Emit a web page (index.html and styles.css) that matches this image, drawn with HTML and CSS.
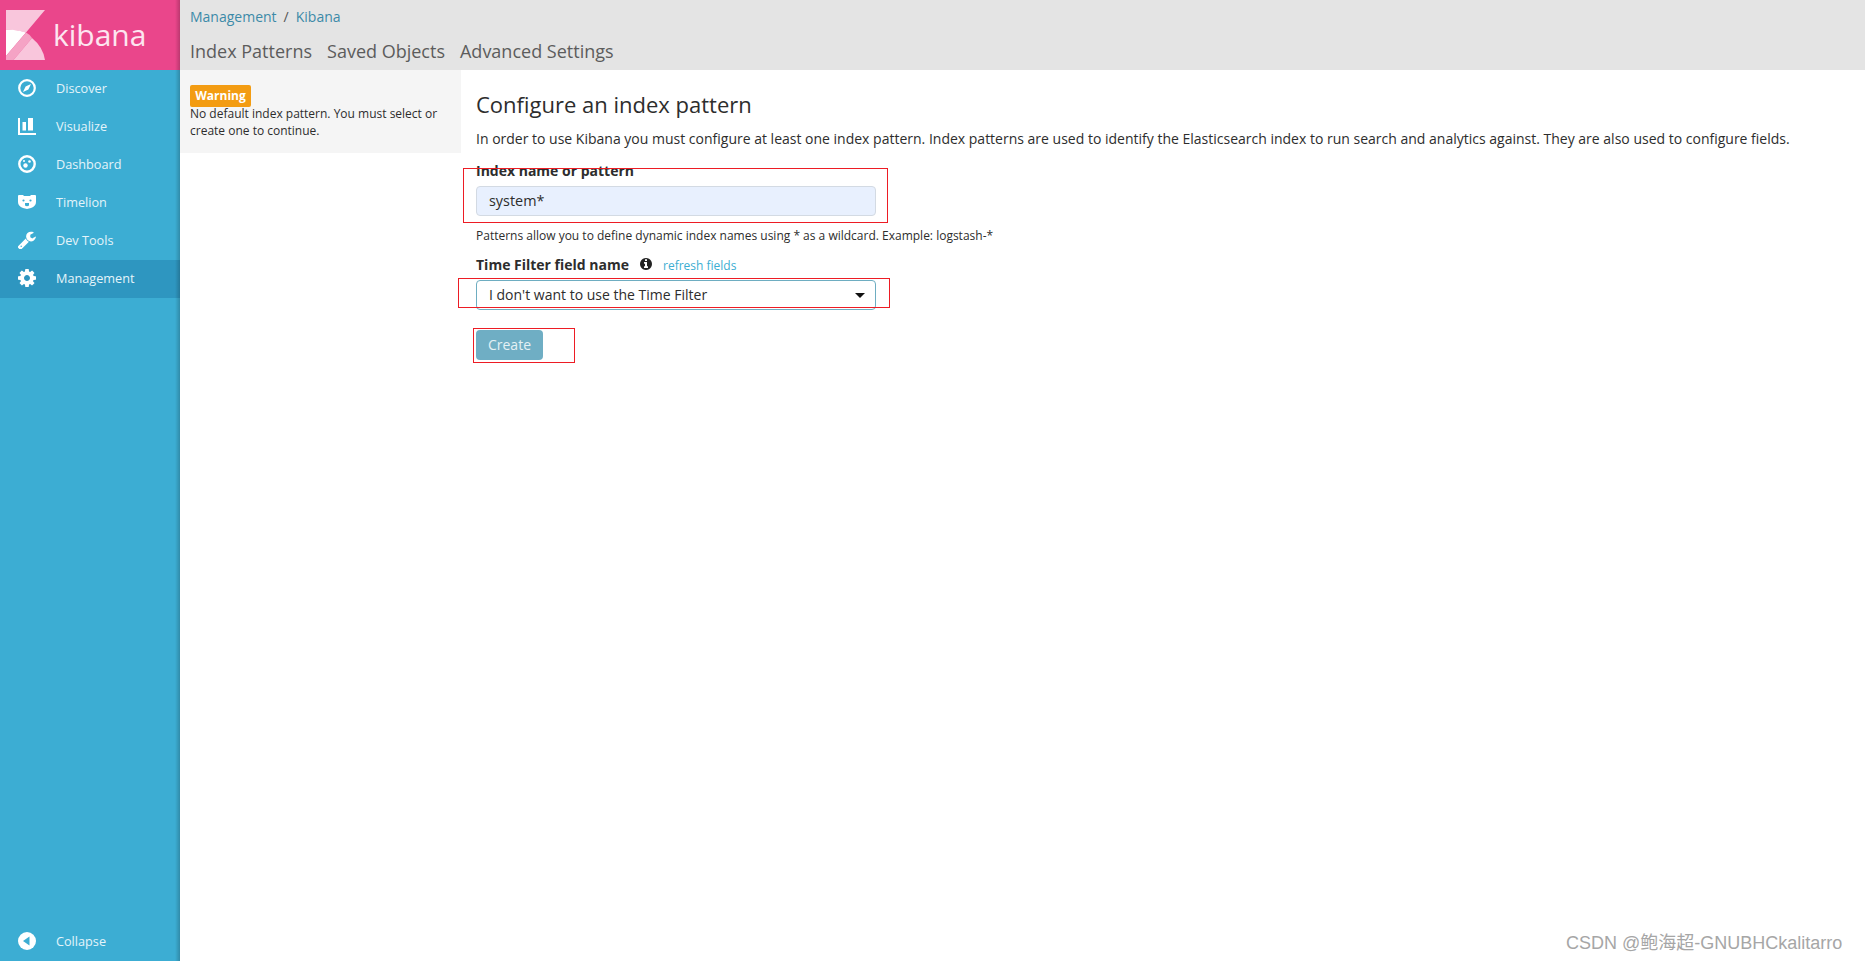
FILE: index.html
```html
<!DOCTYPE html>
<html lang="en">
<head>
<meta charset="utf-8">
<title>Kibana</title>
<link rel="stylesheet" href="styles.css">
</head>
<body>
<div class="app">
  <aside class="sidebar">
    <div class="brand">
      <svg class="logo" viewBox="0 0 39 50" width="39" height="50">
        <path fill="#f9c6dc" d="M0 0H39L20 22.500Q10 19.500 0 19.500Z"/>
        <path fill="#fff" d="M0 19.500Q11 19.500 20 22.500L0 46Z"/>
        <path fill="#f5a3c5" d="M20 22.500Q24 24.500 26 28L7.500 50H0V46Z"/>
        <path fill="#f9c6dc" d="M26 28Q37 37 39 50H7.500Z"/>
      </svg>
      <span class="wordmark">kibana</span>
    </div>
    <nav class="nav">
      <a class="nav-item"><svg class="nav-icon" viewBox="0 0 18 18"><circle cx="9" cy="9" r="7.800" fill="none" stroke="#fff" stroke-width="2.200"/><path fill="#fff" d="M13 5 10.400 10.400 5 13 7.600 7.600Z"/></svg><span>Discover</span></a>
      <a class="nav-item"><svg class="nav-icon" viewBox="0 0 18 18"><path fill="#fff" d="M0 1H2V16H18V18H0ZM4.500 5H8V13.500H4.500ZM10 1H15V13.500H10Z"/></svg><span>Visualize</span></a>
      <a class="nav-item"><svg class="nav-icon" viewBox="0 0 18 18"><circle cx="9" cy="9" r="7.700" fill="none" stroke="#fff" stroke-width="2.400"/><circle cx="7.500" cy="10.500" r="2.200" fill="#fff"/><circle cx="11.500" cy="6.500" r="1.300" fill="#fff"/><circle cx="6" cy="6" r="1" fill="#fff"/></svg><span>Dashboard</span></a>
      <a class="nav-item"><svg class="nav-icon" viewBox="0 0 18 18"><path fill="#fff" fill-rule="evenodd" d="M0 3Q0 2 1 2H5L6 3H12L13 2H17Q18 2 18 3V9Q18 13 13 15L9 16 5 15Q0 13 0 9ZM5.500 6.400A1.100 1.100 0 0 0 5.500 8.600 1.100 1.100 0 0 0 5.500 6.400ZM12.500 6.400A1.100 1.100 0 0 0 12.500 8.600 1.100 1.100 0 0 0 12.500 6.400ZM7 10H11V12.500Q9 14 7 12.500Z"/></svg><span>Timelion</span></a>
      <a class="nav-item"><svg class="nav-icon" viewBox="90 70 1650 1650"><path fill="#fff" d="M448 1472q0-26-19-45t-45-19-45 19-19 45 19 45 45 19 45-19 19-45zm644-420l-682 682q-37 37-90 37-52 0-91-37l-106-108q-38-36-38-90 0-53 38-91l681-681q39 98 114.500 173.500t173.500 114.500zm634-435q0 39-23 106-47 134-164.500 217.500t-258.500 83.500q-185 0-316.500-131.500t-131.500-316.500 131.500-316.500 316.500-131.500q58 0 121.500 16.500t107.500 46.500q16 11 16 28t-16 28l-293 169v224l193 107q5-3 79-48.500t135.500-81 70.500-35.500q15 0 23.500 10t8.500 25z"/></svg><span>Dev Tools</span></a>
      <a class="nav-item active"><svg class="nav-icon" viewBox="128 128 1536 1536"><path fill="#fff" d="M1152 896q0-106-75-181t-181-75-181 75-75 181 75 181 181 75 181-75 75-181zm512-109v222q0 12-8 23t-20 13l-185 28q-19 54-39 91 35 50 107 138 10 12 10 25t-9 23q-27 37-99 108t-94 71q-12 0-26-9l-138-108q-44 23-91 38-16 136-29 186-7 28-36 28h-222q-14 0-24.500-8.500t-11.500-21.500l-28-184q-49-16-90-37l-141 107q-10 9-25 9-14 0-25-11-126-114-165-168-7-10-7-23 0-12 8-23 15-21 51-66.500t54-70.500q-27-50-41-99l-183-27q-13-2-21-12.500t-8-23.500v-222q0-12 8-23t19-13l186-28q14-46 39-92-40-57-107-138-10-12-10-24 0-10 9-23 26-36 98.500-107.500t94.500-71.500q13 0 26 10l138 107q44-23 91-38 16-136 29-186 7-28 36-28h222q14 0 24.500 8.500t11.500 21.500l28 184q49 16 90 37l142-107q9-9 24-9 13 0 25 10 129 119 165 170 7 8 7 22 0 12-8 23-15 21-51 66.500t-54 70.500q26 50 41 98l183 28q13 2 21 12.500t8 23.500z"/></svg><span>Management</span></a>
    </nav>
    <a class="nav-item collapse"><svg class="nav-icon" viewBox="0 0 18 18"><circle cx="9" cy="9" r="9" fill="#fff"/><path fill="#3cadd3" d="M5 9 11.500 4.500V13.500Z"/></svg><span>Collapse</span></a>
  </aside>
  <div class="main">
    <header class="topbar">
      <div class="crumbs"><a>Management</a><span class="sep">/</span><a>Kibana</a></div>
      <div class="tabs"><a>Index Patterns</a><a>Saved Objects</a><a>Advanced Settings</a></div>
    </header>
    <div class="body">
      <section class="notice">
        <span class="badge">Warning</span>
        <p>No default index pattern. You must select or create one to continue.</p>
      </section>
      <section class="content">
        <h1>Configure an index pattern</h1>
        <p class="intro">In order to use Kibana you must configure at least one index pattern. Index patterns are used to identify the Elasticsearch index to run search and analytics against. They are also used to configure fields.</p>
        <label class="field-label first">Index name or pattern</label>
        <div class="control input-box">system*</div>
        <p class="help">Patterns allow you to define dynamic index names using * as a wildcard. Example: logstash-*</p>
        <div class="time-row">
          <label class="field-label">Time Filter field name</label>
          <svg class="info" viewBox="128 128 1536 1536"><path fill="#222" d="M1152 1376v-160q0-14-9-23t-23-9h-96v-512q0-14-9-23t-23-9h-320q-14 0-23 9t-9 23v160q0 14 9 23t23 9h96v320h-96q-14 0-23 9t-9 23v160q0 14 9 23t23 9h448q14 0 23-9t9-23zm-128-896v-160q0-14-9-23t-23-9h-192q-14 0-23 9t-9 23v160q0 14 9 23t23 9h192q14 0 23-9t9-23zm640 416q0 209-103 385.500t-279.500 279.500-385.500 103-385.500-103-279.500-279.500-103-385.500 103-385.500 279.500-279.500 385.500-103 385.500 103 279.500 279.500 103 385.500z"/></svg>
          <a class="refresh">refresh fields</a>
        </div>
        <div class="control select-box"><span>I don't want to use the Time Filter</span><i class="caret"></i></div>
        <button class="create">Create</button>
      </section>
    </div>
  </div>
</div>
<div class="mark mark-a"></div>
<div class="mark mark-b"></div>
<div class="mark mark-c"></div>
<div class="watermark">CSDN @鲍海超-GNUBHCkalitarro</div>
</body>
</html>
```
FILE: styles.css
```css
* { box-sizing: border-box; }
html, body { margin: 0; height: 100%; background: #fff; overflow: hidden; }
body { font-family: "Open Sans", "Noto Sans", sans-serif; color: #2d2d2d; position: relative; }
.app { display: flex; height: 961px; }

.sidebar { position: relative; width: 180px; flex: none; background: #3cadd3; display: flex; flex-direction: column; }
.sidebar::after { content: ""; position: absolute; top: 0; right: 0; bottom: 0; width: 5px; background: linear-gradient(to right, rgba(0,0,0,0), rgba(0,0,0,.2)); }
.brand { height: 70px; background: #ea468b; display: flex; align-items: flex-start; padding: 10px 0 0 6px; }
.logo { display: block; flex: none; }
.wordmark { font-size: 30px; line-height: 40px; margin-left: 8px; margin-top: 5px; color: #fde6f0; }
.nav { flex: 1; display: flex; flex-direction: column; }
.nav-item { height: 38px; display: flex; align-items: center; padding: 0 0 2px 18px; color: #e4f4fa; font-size: 12.700px; }
.nav-item span { margin-left: 20px; }
.nav-item.active { background: #2e96c0; }
.nav-icon { width: 18px; height: 18px; flex: none; display: block; }

.main { flex: 1; min-width: 0; display: flex; flex-direction: column; }
.topbar { height: 70px; background: #e4e4e4; padding: 7px 10px 0; flex: none; }
.crumbs { font-size: 14px; line-height: 19px; color: #3c8aa8; display: flex; }
.sep { margin: 0 7px; color: #555; }
.tabs { display: flex; gap: 15px; margin-top: 13px; font-size: 18px; line-height: 25px; color: #5c5c5c; }

.body { flex: 1; display: flex; align-items: flex-start; }
.notice { width: 281px; height: 83px; flex: none; background: #f5f5f5; padding: 15px 10px 0; }
.badge { display: block; width: 61px; height: 22px; background: #f39c12; border-radius: 2px; color: #fff; font-size: 12px; font-weight: 700; line-height: 22px; text-align: center; }
.notice p { margin: -2px 0 0; font-size: 12px; line-height: 17px; color: #2d2d2d; }

.content { flex: 1; padding: 18px 15px 0; min-width: 0; }
h1 { margin: 0; font-size: 22px; font-weight: 400; line-height: 32px; color: #2d2d2d; }
.intro { margin: 9px 0 0; font-size: 14px; line-height: 20px; white-space: nowrap; }
.field-label { display: block; font-size: 14px; font-weight: 700; line-height: 20px; color: #2d2d2d; }
.first { margin-top: 12px; }
.control { width: 400px; height: 30px; border-radius: 4px; font-size: 14px; line-height: 28px; padding: 0 10px 0 12px; }
.input-box { margin-top: 5px; background: #e8f0fe; border: 1px solid #d3dae3; font-size: 14.400px; }
.help { margin: 11px 0 0; font-size: 12px; line-height: 17px; }
.time-row { display: flex; align-items: center; margin-top: 10px; height: 20px; }
.time-row .field-label { margin-top: 2px; }
.info { width: 12px; height: 12px; margin-left: 11px; flex: none; }
.refresh { margin: 2px 0 0 11px; font-size: 12px; color: #3caed2; }
.select-box { margin-top: 6px; border: 1px solid #6eadc1; display: flex; align-items: center; justify-content: space-between; }
.caret { width: 0; height: 0; border: 5px solid transparent; border-top: 5px solid #111; border-bottom: 0; margin-top: 1px; }
.create { display: block; margin-top: 20px; width: 67px; height: 30px; border: 0; border-radius: 4px; background: #6faec4; color: #e4f1f5; font: 14px "Open Sans", sans-serif; padding: 0 0 2px; }

.mark { position: absolute; border: 1px solid #ed1c24; pointer-events: none; }
.mark-a { left: 463px; top: 168px; width: 425px; height: 55px; }
.mark-b { left: 458px; top: 278px; width: 432px; height: 30px; }
.mark-c { left: 473px; top: 328px; width: 102px; height: 35px; }
.watermark { position: absolute; left: 1566px; top: 931px; font-family: "Liberation Sans", "Noto Sans CJK SC", sans-serif; font-size: 18px; line-height: 24px; color: #a6a6a6; white-space: nowrap; }
```
